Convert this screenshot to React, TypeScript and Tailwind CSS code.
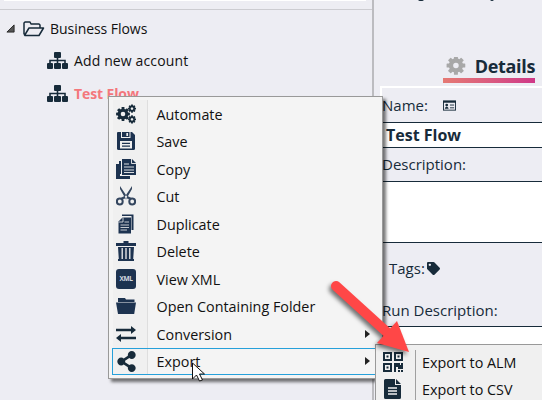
import React from 'react';
import { FaTag, FaShareAlt } from 'react-icons/fa';

const Svg = ({ children, className = '' }: { children: React.ReactNode; className?: string }) => (
  <svg viewBox="0 0 20 20" className={`h-5 w-5 shrink-0 ${className}`} fill="currentColor">{children}</svg>
);

// A ring with evenly spaced square teeth around it.
const Gear = ({ x, y, r, hole, tooth }: { x: number; y: number; r: number; hole: number; tooth: number }) => (
  <g transform={`translate(${x} ${y})`}>
    <circle r={(r + hole) / 2} fill="none" stroke="currentColor" strokeWidth={r - hole} />
    {[0, 45, 90, 135, 180, 225, 270, 315].map((a) => (
      <rect key={a} x={-tooth / 2} y={-r - tooth * 0.55} width={tooth} height={tooth} rx={tooth * 0.15} transform={`rotate(${a})`} />
    ))}
  </g>
);

const SitemapIcon = () => (
  <svg viewBox="0 0 21 17" className="h-[17px] w-[21px] shrink-0" fill="#172b3a">
    <rect x="7" width="7" height="6" rx="1" />
    <rect y="11" width="6" height="6" rx="1" />
    <rect x="7" y="11" width="7" height="6" rx="1" />
    <rect x="15" y="11" width="6" height="6" rx="1" />
    <path d="M10.500 5v7M3 12V8.500h15V12" fill="none" stroke="#172b3a" strokeWidth="1.600" />
  </svg>
);
const CogsIcon = () => (
  <Svg className="text-[#172b3a]">
    <Gear x={7} y={10} r={5.3} hole={2.3} tooth={2.9} />
    <Gear x={16} y={4.600} r={3} hole={1.300} tooth={1.900} />
    <Gear x={16} y={15.400} r={3} hole={1.300} tooth={1.900} />
  </Svg>
);
const SaveIcon = () => (
  <Svg>
    <path d="M2 1h14l3 3v13.500q0 1.500-1.500 1.500h-15Q1 19 1 17.500V2q0-1 1-1z" />
    <path d="M5 1h9.500v6H5zM4 10h12v7.500H4z" fill="#f0f0f0" />
    <path d="M6 1h7.500v5H6z" />
    <path d="M11.200 2v3" stroke="#f0f0f0" strokeWidth="1.700" />
    <path d="M6 12.300h8M6 15.200h8" stroke="currentColor" strokeWidth="1.200" />
  </Svg>
);
const CopyIcon = () => (
  <Svg>
    <path d="M0 5h4v12h10v3H0z" />
    <path d="M3 2h3v13H3z" />
    <path d="M6 0h10l4 4v12H6z" />
    <path d="M15.500 0v4.500H20M8 5h5M8 8h10M8 11h10M8 13.500h10" stroke="#f0f0f0" strokeWidth="0.900" fill="none" />
    <path d="M5.500 1v15.500H19" stroke="#f0f0f0" fill="none" />
  </Svg>
);
const CutIcon = () => (
  <Svg className="text-[#34465f]">
    <path d="M4 0l8 12-2 1.500L4 3zM16 0L8 12l2 1.500L16 3z" />
    <path d="M9 11l-4 2M11 11l4 2" stroke="currentColor" strokeWidth="2.200" />
    <circle cx="3.800" cy="15.500" r="2.900" fill="none" stroke="currentColor" strokeWidth="2" />
    <circle cx="16.200" cy="15.500" r="2.900" fill="none" stroke="currentColor" strokeWidth="2" />
  </Svg>
);
const DuplicateIcon = () => (
  <Svg>
    <path d="M6 0.500h11.500V16H15.500V2H6z" />
    <path d="M6.500 3.500H15V19.500H2.500V7.500z" />
    <path d="M2.500 8H7V3.500M4.500 11h8.500M4.500 13.500h8.500M4.500 16h6.500M8.500 8h4.500" stroke="#f0f0f0" strokeWidth="0.800" fill="none" />
  </Svg>
);
const DeleteIcon = () => (
  <Svg>
    <path d="M7.500 0h5v2H20v3H0V2h7.500zM2 6h16l-.8 12H18v2H2v-2h.8z" />
    <path d="M6.200 7V18M10 7V18M13.800 7V18" stroke="#f0f0f0" strokeWidth="1.300" />
  </Svg>
);
const XmlIcon = () => (
  <span className="flex h-5 w-5 items-center justify-center rounded-[3px] bg-[#1d3350] text-[6.500px] font-bold tracking-[-0.3px] text-[#d5dae1]">XML</span>
);
const FolderIcon = () => (
  <Svg><path d="M2 2h7l1 1.500h8.500V6H2zM0 6.500h20l-1.800 11.500H2z" /></Svg>
);
const ConvertIcon = () => (
  <Svg className="text-[#172b3a]"><path d="M0 4.700h15V2l5 4-5 4V7.300H0zM20 12.700H5V10l-5 4 5 4v-2.700h15z" /></Svg>
);
const QrIcon = () => (
  <svg viewBox="0 0 20 20" className="h-5 w-5 shrink-0" fill="currentColor">
    <path d="M0 0h9v9H0zM11 0h9v9h-9zM0 11h9v9H0zM11 11h6v2h1v-2h2v6h-5v-2h-2v5h-2zM15 18h2v2h-2zM18 18h2v2h-2z" />
    <path d="M2 2h5v5H2zM13 2h5v5h-5zM2 13h5v5H2z" fill="#f0f0f0" />
    <path d="M3.500 3.500h2v2h-2zM14.500 3.500h2v2h-2zM3.500 14.500h2v2h-2z" />
  </svg>
);
const FileIcon = () => (
  <svg viewBox="0 0 17 20" className="h-5 w-[17px] shrink-0" fill="currentColor">
    <path d="M1.500 0H11v6h6v12.500q0 1.500-1.500 1.500h-14Q0 20 0 18.500v-17Q0 0 1.500 0zM12 0l5 5h-5z" />
    <path d="M4 9h9M4 12h9M4 15h9" stroke="#f0f0f0" strokeWidth="1.300" />
  </svg>
);

const items = [
  { label: 'Automate', icon: <CogsIcon /> },
  { label: 'Save', icon: <SaveIcon /> },
  { label: 'Copy', icon: <CopyIcon /> },
  { label: 'Cut', icon: <CutIcon /> },
  { label: 'Duplicate', icon: <DuplicateIcon /> },
  { label: 'Delete', icon: <DeleteIcon /> },
  { label: 'View XML', icon: <XmlIcon /> },
  { label: 'Open Containing Folder', icon: <FolderIcon /> },
  { label: 'Conversion', icon: <ConvertIcon />, sub: true },
  { label: 'Export', icon: <FaShareAlt className="h-[21px] w-[21px] text-[#172b3a]" />, sub: true },
];

function Tree() {
  return (
    <div className="h-full w-[372px] shrink-0 text-[14px] text-[#111]">
      <div className="ml-1 mr-[6px] h-px bg-white" />
      <div className="h-[9px] border-b border-[#ccccd1]" />
      <div className="flex h-[37px] items-center pl-[6px]">
        <svg viewBox="0 0 10 10" className="h-[9px] w-[9px]"><path d="M9 1v8H1z" fill="#555" stroke="#222" /></svg>
        <svg viewBox="0 0 22 16" className="ml-2 h-4 w-[22px]" fill="none" stroke="#172b3a" strokeWidth="1.500" strokeLinejoin="round">
          <path d="M1 13V2l1-1h5l1 2h8l1 1v3M1.500 14.500L6 7h14.500L16 14.500H2L1 13" />
        </svg>
        <span className="ml-[5px] tracking-[-0.05px]">Business Flows</span>
      </div>
      <div className="flex h-[27px] items-center pl-[47px]"><SitemapIcon /><span className="ml-[6px] tracking-[0.13px]">Add new account</span></div>
      <div className="flex h-[39px] items-center pl-[47px]"><SitemapIcon /><span className="ml-[6px] font-bold tracking-[-0.1px] text-[#f4777c]">Test Flow</span></div>
    </div>
  );
}

function DetailsPane() {
  return (
    <div className="flex h-full flex-1 flex-col overflow-hidden border-l-2 border-[#bcbcc0] pl-[6px] text-[#172b3a]">
      <div className="flex h-[56px] shrink-0 pl-[38px]">
        <span className="mt-px h-[2px] w-[6px] -translate-y-[2px] rounded-b-full bg-[#172b3a]" />
        <span className="ml-[66px] mt-px h-[2px] w-[4px] -translate-y-[2px] rounded-b-full bg-[#172b3a]" />
      </div>
      <div className="ml-[63px] flex h-[30px] w-[92px] shrink-0 flex-col">
        <div className="flex h-[22px] items-center pl-[3px]">
          <svg viewBox="0 0 20 20" className="h-5 w-5 text-[#a8a8a8]" fill="currentColor"><Gear x={10} y={8.500} r={7.200} hole={2.800} tooth={4} /></svg>
          <span className="ml-[9px] pb-[3px] text-[18px] font-bold leading-none tracking-[-0.35px]">Details</span>
        </div>
        <div className="h-[5px] shrink-0 bg-linear-to-r from-[#e57973] to-[#cf3787]" />
      </div>
      <div className="flex-1 border-l-2 border-t-2 border-white text-[15px]">
        <div className="flex h-[34px] items-center">Name:
          <svg viewBox="0 0 14 11" className="ml-[15px] h-[11px] w-[13px]"><path d="M0 0h14v11H0z" fill="#172b3a" /><path d="M1 2.500h12V10H1z" fill="#ededf3" /><path d="M2 9c0-3 4-3 4 0z" fill="#172b3a" /><circle cx="4" cy="5" r="1.500" fill="#172b3a" /><path d="M7.500 5H12M7.500 8H12" stroke="#172b3a" /></svg>
        </div>
        <div className="flex h-[26px] items-center border-y border-[#172b3a] bg-white pl-1 text-[16px] font-bold">Test Flow</div>
        <div className="flex h-[33px] items-center">Description:</div>
        <div className="h-[62px] border-y border-[#172b3a] bg-white" />
        <div className="flex h-[51px] items-center pl-[7px]">Tags:<FaTag className="ml-[2px] h-[13px] w-[13px]" /></div>
        <div className="flex h-[32px] items-center">Run Description:</div>
        <div className="h-[80px] border-t border-[#172b3a] bg-white" />
      </div>
    </div>
  );
}

export default function App() {
  return (
    <div className="relative flex h-[400px] w-[542px] overflow-hidden bg-[#ededf3] font-['Open_Sans',sans-serif]">
      <Tree />
      <DetailsPane />
      <div className="absolute left-[108px] top-[96px] flex h-[283px] w-[275px] flex-col border border-[#999] bg-[#f4f4f4] py-[3px] pl-[3px] text-[14.350px] text-[#111] shadow-[3px_3px_3px_#0008]">
        {items.map((item) => (
          <div key={item.label} className={`flex h-[27.500px] items-center border ${item.label === 'Export' ? 'border-[#26a0da]' : 'border-transparent'}`}>
            <span className={`flex w-[35px] shrink-0 items-center border-r border-[#dedede] bg-[#f0f0f0] pl-[3px] text-[#1d3350] ${item.label === 'Export' ? 'h-[25.500px]' : 'h-[27.500px]'}`}>{item.icon}</span>
            <span className="ml-[8.500px] pt-[1.500px]">{item.label}</span>
            {item.sub && <span className="ml-auto mr-[11px] h-0 w-0 border-y-4 border-l-[5px] border-y-transparent border-l-[#222]" />}
          </div>
        ))}
      </div>
      <div className="absolute left-[375px] top-[344px] flex h-[60px] w-[180px] border-l border-t border-[#999] bg-[#f0f0f0] text-[14.350px] text-[#111]">
        <div className="mt-[5px] flex w-[40px] flex-col border-r border-[#a0a0a0] pl-[7px] text-[#172b3a]">
          <div className="mt-[2px]"><QrIcon /></div>
          <div className="ml-px mt-[7px]"><FileIcon /></div>
        </div>
        <div className="ml-[6px] mt-[4px]"><div className="flex h-[27px] items-center">Export to ALM</div><div className="flex h-[27px] items-center">Export to CSV</div></div>
      </div>
      <svg viewBox="0 0 542 400" className="absolute inset-0 h-[400px] w-[542px]">
        <g className="drop-shadow-[-2px_3px_2px_#0008]"><path d="M336 286L390 335" stroke="#ff4747" strokeWidth="10" strokeLinecap="round" /><path d="M409 352l-32-9 20-22z" fill="#ff4747" /></g>
        <path d="M192.500 363v16l4-4 3 6 3-1-3-6h5z" fill="white" stroke="#111" />
      </svg>
    </div>
  );
}
